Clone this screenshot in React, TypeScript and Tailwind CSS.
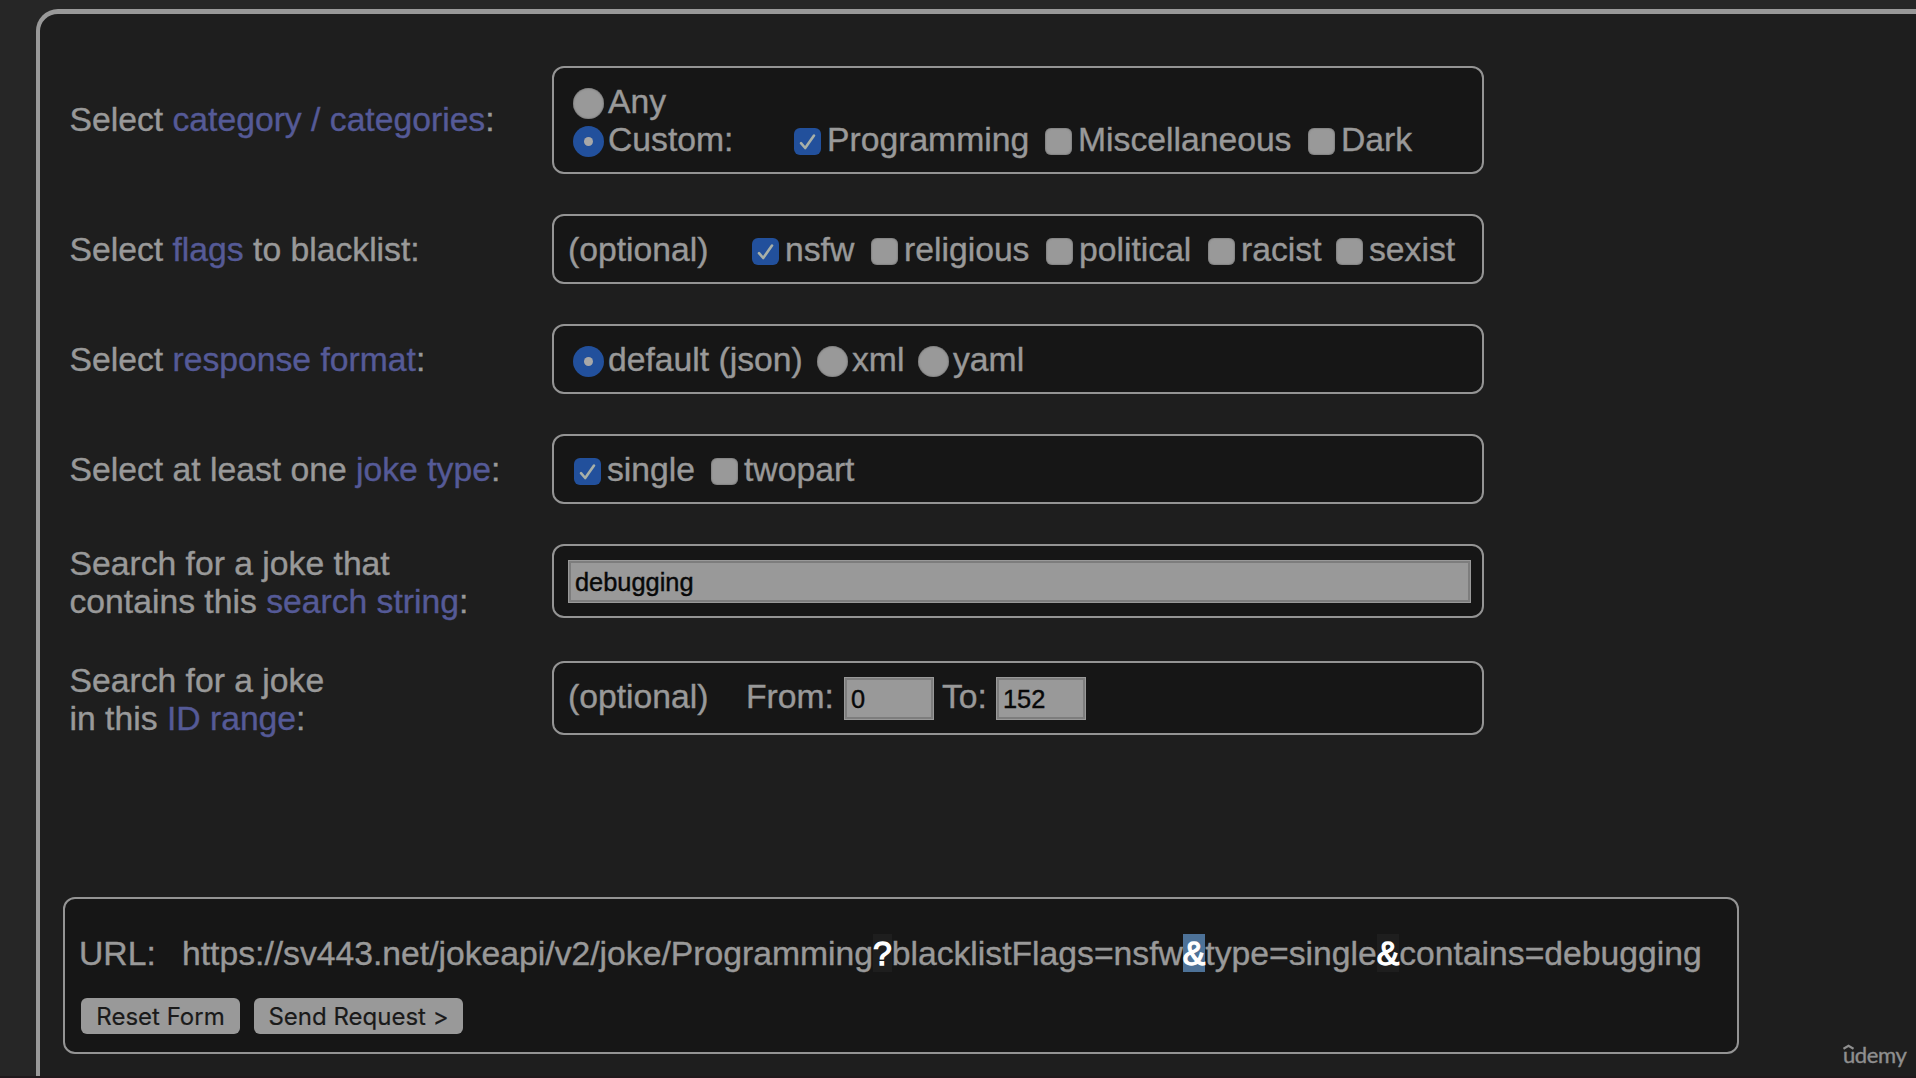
import React from "react";

const Text = ({ children, w, className = "" }: { children: React.ReactNode; w: number; className?: string }) => (
  <span className={`shrink-0 whitespace-nowrap ${className}`} style={{ width: w }}>
    {children}
  </span>
);

const Link = ({ children }: { children: React.ReactNode }) => <a className="text-[#555a97]">{children}</a>;

function Check({ on = false }: { on?: boolean }) {
  return (
    <span
      className={`mr-[6px] mt-[5px] flex size-[27px] shrink-0 items-center justify-center rounded-[6px] ${
        on ? "bg-[#22509c]" : "bg-[#999] shadow-[inset_0_0_2px_#555]"
      }`}
    >
      {on && (
        <svg viewBox="0 0 27 27" className="size-[27px]" fill="none" stroke="#a8b0a8" strokeWidth="2.6" strokeLinecap="round" strokeLinejoin="round">
          <path d="M7 15.2 11.2 20 20 7.5" />
        </svg>
      )}
    </span>
  );
}

function Radio({ on = false }: { on?: boolean }) {
  return (
    <span
      className={`mr-[4px] mt-[5px] flex size-[31px] shrink-0 items-center justify-center rounded-full ${
        on ? "bg-[#22509c]" : "bg-[#999] shadow-[inset_0_0_2px_#555]"
      }`}
    >
      {on && <span className="size-[9px] rounded-full bg-[#a8a8a8]" />}
    </span>
  );
}

const Row = ({
  label,
  children,
  className,
  labelClass = "",
}: {
  label: React.ReactNode;
  children: React.ReactNode;
  className: string;
  labelClass?: string;
}) => (
  <div className={`flex items-center ${className}`}>
    <div className={`w-[482.5px] shrink-0 ${labelClass}`}>{label}</div>
    <div className="flex h-full w-[932px] flex-col justify-center rounded-[12px] border-2 border-[#949494] bg-[#161616] pl-[14px]">
      {children}
    </div>
  </div>
);

const Field = ({ children, className }: { children: React.ReactNode; className: string }) => (
  <div
    className={`h-[43px] shrink-0 border border-[#999] bg-[#999] pl-[6px] text-[25.4px] leading-[43px] text-[#080808] shadow-[inset_0_0_0_2px_#7d7d7d] ${className}`}
  >
    {children}
  </div>
);

export default function App() {
  return (
    <div className="relative h-[1078px] w-[1916px] overflow-hidden bg-[#262626] pl-9 pt-[9px] font-['Liberation_Sans',Arial,sans-serif] text-[33.7px] leading-[38px] text-[#999] [-webkit-text-stroke-width:0.4px]">
      <main className="h-[1100px] w-[1920px] rounded-tl-[22px] border-l-[4px] border-t-[5px] border-[#999] bg-[#1e1e1e] pl-[29.5px] pt-[52px]">
        <Row className="mb-10 h-[108px]" labelClass="pb-[3px]" label={<>Select <Link>category / categories</Link>:</>}>
          <div className="flex h-[38px] items-center pl-[5px]">
            <Radio />
            Any
          </div>
          <div className="flex h-[38px] items-center pl-[5px]">
            <Radio on />
            <Text w={186}>Custom:</Text>
            <Check on />
            <Text w={218}>Programming</Text>
            <Check />
            <Text w={230}>Miscellaneous</Text>
            <Check />
            Dark
          </div>
        </Row>
        <Row className="mb-10 h-[70px]" label={<>Select <Link>flags</Link> to blacklist:</>}>
          <div className="flex items-center">
            <Text w={184}>(optional)</Text>
            <Check on />
            <Text w={86}>nsfw</Text>
            <Check />
            <Text w={142}>religious</Text>
            <Check />
            <Text w={129}>political</Text>
            <Check />
            <Text w={95}>racist</Text>
            <Check />
            sexist
          </div>
        </Row>
        <Row className="mb-10 h-[70px]" label={<>Select <Link>response format</Link>:</>}>
          <div className="flex items-center pl-[5px]">
            <Radio on />
            <Text w={209}>default (json)</Text>
            <Radio />
            <Text w={66}>xml</Text>
            <Radio />
            yaml
          </div>
        </Row>
        <Row className="mb-10 h-[70px]" label={<>Select at least one <Link>joke type</Link>:</>}>
          <div className="flex items-center pl-[6px]">
            <Check on />
            <Text w={104}>single</Text>
            <Check />
            twopart
          </div>
        </Row>
        <Row className="mb-[43px] h-[74px]" labelClass="pt-[1px]" label={<>Search for a joke that<br />contains this <Link>search string</Link>:</>}>
          <Field className="w-[903px]">debugging</Field>
        </Row>
        <Row className="mb-[162px] h-[74px]" labelClass="pt-[1px]" label={<>Search for a joke<br />in this <Link>ID range</Link>:</>}>
          <div className="flex items-center">
            <Text w={178} className="-mt-[5px]">(optional)</Text>
            <Text w={98} className="-mt-[5px]">From:</Text>
            <Field className="w-[90px]">0</Field>
            <Text w={54} className="-mt-[5px] ml-[8px]">To:</Text>
            <Field className="w-[90px]">152</Field>
          </div>
        </Row>
        <section className="-ml-[6.5px] h-[157px] w-[1676px] rounded-[12px] border-2 border-[#949494] bg-[#161616] pl-[14px] pt-[35px]">
          <div className="flex">
            <Text w={103}>URL:</Text>
            <span className="whitespace-nowrap">
              https://sv443.net/jokeapi/v2/joke/Programming<span className="bg-[#1e1e1e] text-white [-webkit-text-stroke-width:1.3px]">?</span>blacklistFlags=nsfw
              <span className="bg-[#4d7298] text-white [-webkit-text-stroke-width:1.3px]">&amp;</span>type=single
              <span className="bg-[#1e1e1e] text-white [-webkit-text-stroke-width:1.3px]">&amp;</span>contains=debugging
            </span>
          </div>
          <div className="mt-[26px] flex gap-[14px] pl-[2px] font-[Inter,sans-serif] text-[24px] leading-[38px] text-[#1a1a1a] [-webkit-text-stroke-width:0.2px]">
            <button className="h-9 w-[159px] rounded-[6px] bg-[#999]">Reset Form</button>
            <button className="h-9 w-[209px] rounded-[6px] bg-[#999]">Send Request &gt;</button>
          </div>
        </section>
      </main>
      <div className="absolute left-[1843px] top-[1040px] flex flex-col font-[Lato,sans-serif] text-[22px] leading-[30px] text-[#8f8f8f]">
        <svg viewBox="0 0 12 6" className="absolute left-0 top-[4px] h-[6px] w-[11px]" fill="none" stroke="#8f8f8f" strokeWidth="2.4">
          <path d="M0.5 5 6 1.7 11.5 5" />
        </svg>
        <span className="tracking-[-0.4px]">udemy</span>
      </div>
      <div className="absolute inset-x-0 bottom-0 h-[2px] bg-[#1f191c]" />
    </div>
  );
}
